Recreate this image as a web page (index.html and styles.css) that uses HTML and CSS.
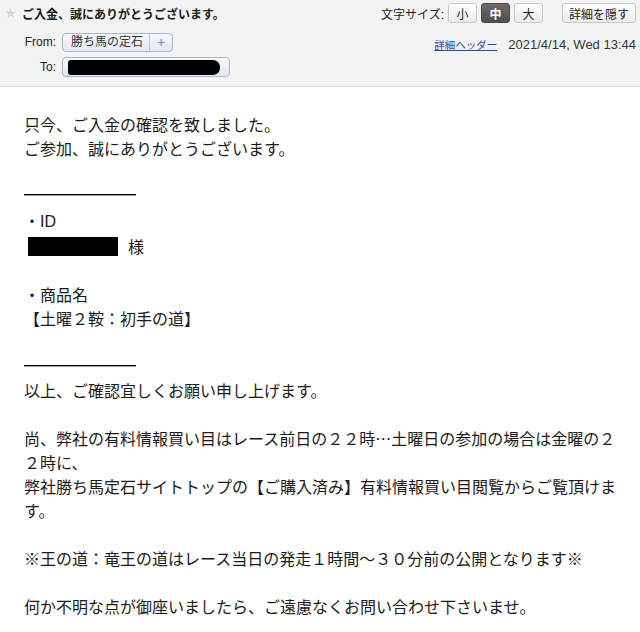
FILE: index.html
```html
<!DOCTYPE html>
<html lang="ja">
<head>
<meta charset="utf-8">
<title>ご入金、誠にありがとうございます。</title>
<link rel="stylesheet" href="styles.css">
</head>
<body>
<header class="mail-head">
  <div class="head-left">
    <div class="subject-row">
      <span class="star">★</span>
      <span class="subject">ご入金、誠にありがとうございます。</span>
    </div>
    <div class="addr-row from-row">
      <span class="label">From:</span>
      <span class="pill"><span class="pill-name">勝ち馬の定石</span><span class="pill-add">+</span></span>
    </div>
    <div class="addr-row to-row">
      <span class="label">To:</span>
      <span class="pill pill-to"><span class="redact-to"></span></span>
    </div>
  </div>
  <div class="head-right">
    <div class="tools">
      <span class="tools-label">文字サイズ:</span>
      <span class="btn size">小</span>
      <span class="btn size active">中</span>
      <span class="btn size">大</span>
      <span class="btn hide">詳細を隠す</span>
    </div>
    <div class="meta">
      <a class="detail-link" href="#">詳細ヘッダー</a>
      <span class="date">2021/4/14, Wed 13:44</span>
    </div>
  </div>
</header>
<main class="mail-body">
  <p class="line">只今、ご入金の確認を致しました。</p>
  <p class="line">ご参加、誠にありがとうございます。</p>
  <p class="line blank"></p>
  <div class="rule"><span class="rule-bar"></span></div>
  <p class="line">・<span class="latin">ID</span></p>
  <p class="line"><span class="redact-id"></span>様</p>
  <p class="line blank"></p>
  <p class="line">・商品名</p>
  <p class="line">【土曜２鞍：初手の道】</p>
  <p class="line blank"></p>
  <div class="rule rule-2"><span class="rule-bar"></span></div>
  <p class="line">以上、ご確認宜しくお願い申し上げます。</p>
  <p class="line blank"></p>
  <p class="line">尚、弊社の有料情報買い目はレース前日の２２時…土曜日の参加の場合は金曜の２２時に、</p>
  <p class="line">弊社勝ち馬定石サイトトップの【ご購入済み】有料情報買い目閲覧からご覧頂けます。</p>
  <p class="line blank"></p>
  <p class="line">※王の道：竜王の道はレース当日の発走１時間～３０分前の公開となります※</p>
  <p class="line blank"></p>
  <p class="line">何か不明な点が御座いましたら、ご遠慮なくお問い合わせ下さいませ。</p>
</main>
</body>
</html>
```

FILE: styles.css
```css
* { box-sizing: border-box; }
html, body { margin: 0; padding: 0; background: #fff; }
body {
  width: 640px;
  font-family: "Liberation Sans", "Noto Sans CJK JP", sans-serif;
  color: #111;
  overflow: hidden;
}

.mail-head {
  height: 87px;
  background: #f3f3f3;
  border-bottom: 1px solid #dcdcdc;
  display: flex;
  justify-content: space-between;
  padding: 3px 4px 0 5px;
  font-size: 12px;
  color: #222;
}

.subject-row {
  height: 20px;
  display: flex;
  align-items: center;
}
.star {
  width: 17px;
  font-size: 11px;
  color: #d6d6d6;
  line-height: 1;
}
.subject {
  font-weight: bold;
  font-size: 12px;
  color: #1a1a1a;
}

.addr-row {
  display: flex;
  align-items: center;
  height: 20px;
}
.from-row { margin-top: 9px; }
.to-row { margin-top: 5px; }
.label {
  width: 51px;
  text-align: right;
  margin-right: 6px;
  font-size: 12px;
  color: #222;
}
.pill {
  display: flex;
  align-items: stretch;
  height: 19px;
  border: 1px solid #a8b6cb;
  border-radius: 4px;
  background: linear-gradient(#f6f8fb, #e2e8f1);
  line-height: 17px;
  color: #333;
}
.pill-name {
  padding: 0 6px 0 8px;
  font-size: 12px;
  border-right: 1px solid #b9c5d6;
}
.pill-add {
  width: 22px;
  text-align: center;
  font-size: 14px;
  color: #7d8ea8;
}
.pill-to {
  width: 168px;
  height: 20px;
  align-items: center;
  padding-left: 5px;
}
.redact-to {
  display: block;
  width: 152px;
  height: 15px;
  background: #000;
  border-radius: 3px 7px 7px 3px;
}

.head-right {
  display: flex;
  flex-direction: column;
  align-items: flex-end;
}
.tools {
  display: flex;
  align-items: center;
  height: 20px;
}
.tools-label {
  font-size: 12px;
  margin-right: 4px;
  color: #222;
}
.btn {
  display: flex;
  align-items: center;
  justify-content: center;
  height: 20px;
  border: 1px solid #c9c9c9;
  border-radius: 3px;
  background: linear-gradient(#fdfdfd, #ececec);
  font-size: 12px;
  color: #222;
}
.size { width: 29px; margin-right: 4px; }
.size.active {
  background: linear-gradient(#6a6a6a, #505050);
  border-color: #4a4a4a;
  color: #fff;
  font-weight: bold;
}
.hide { width: 74px; margin-left: 15px; margin-right: 0; }

.meta {
  display: flex;
  align-items: center;
  margin-top: 13px;
  height: 16px;
  padding-right: 0;
}
.detail-link {
  font-size: 10.5px;
  color: #2b4aa0;
  text-decoration: underline;
  margin-right: 11px;
}
.date {
  font-size: 13px;
  color: #333;
}

.mail-body {
  width: 640px;
  padding: 25px 24px 0 24px;
  font-family: "Noto Sans CJK JP", sans-serif;
  font-size: 16px;
  line-height: 24px;
  color: #1a1a1a;
}
.line {
  margin: 0;
  min-height: 24px;
  word-break: break-all;
}
.latin { font-family: "Liberation Sans", sans-serif; }

.rule {
  height: 24px;
  padding-top: 10px;
}
.rule-2 { padding-top: 11px; }
.rule-bar {
  display: block;
  width: 112px;
  height: 1px;
  background: #000;
  box-shadow: 0 0.5px 0 #444;
}

.redact-id {
  display: inline-block;
  vertical-align: top;
  width: 90px;
  height: 19px;
  margin: 3px 10px 0 4px;
  background: #000;
}
```
